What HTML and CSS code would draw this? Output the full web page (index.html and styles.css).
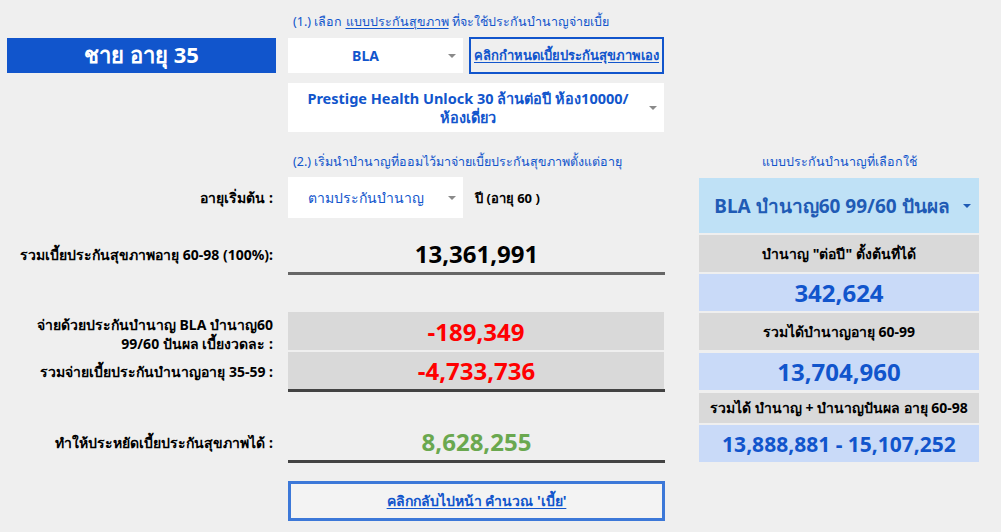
FILE: index.html
```html
<!DOCTYPE html>
<html lang="th">
<head>
<meta charset="utf-8">
<title>ชาย อายุ 35</title>
<link rel="stylesheet" href="styles.css">
</head>
<body>
<div class="sheet">
  <!-- step 1 caption -->
  <div class="caption cap-top c-mid r1">(1.) เลือก <u>แบบประกันสุขภาพ</u> ที่จะใช้ประกันบำนาญจ่ายเบี้ย</div>

  <div class="title c-left r2">ชาย อายุ 35</div>
  <div class="pair c-mid r2">
    <div class="select select-short"><span class="select-text bold">BLA</span><span class="caret"></span></div>
    <a class="link-box" href="#">คลิกกำหนดเบี้ยประกันสุขภาพเอง</a>
  </div>

  <div class="select select-tall c-mid r4">
    <span class="select-text bold">Prestige Health Unlock 30 ล้านต่อปี ห้อง10000/<br>ห้องเดี่ยว</span><span class="caret"></span>
  </div>

  <!-- step 2 caption -->
  <div class="caption cap-step c-mid r5">(2.) เริ่มนำบำนาญที่ออมไว้มาจ่ายเบี้ยประกันสุขภาพตั้งแต่อายุ</div>

  <div class="label c-left r6">อายุเริ่มต้น :</div>
  <div class="pair c-mid r6">
    <div class="select select-age"><span class="select-text">ตามประกันบำนาญ</span><span class="caret"></span></div>
    <span class="unit">ปี (อายุ 60 )</span>
  </div>

  <div class="label c-left r8">รวมเบี้ยประกันสุขภาพอายุ 60-98 (100%):</div>
  <div class="value c-mid r8 rule-mid">13,361,991</div>

  <div class="label c-left r10 label-two">จ่ายด้วยประกันบำนาญ BLA บำนาญ60<br>99/60 ปันผล เบี้ยงวดละ :</div>
  <div class="value c-mid r10 shade neg gap-below">-189,349</div>

  <div class="label c-left r11">รวมจ่ายเบี้ยประกันบำนาญอายุ 35-59 :</div>
  <div class="value c-mid r11 shade-ruled neg">-4,733,736</div>

  <div class="label c-left r13">ทำให้ประหยัดเบี้ยประกันสุขภาพได้ :</div>
  <div class="value c-mid r13 pos rule-dark">8,628,255</div>

  <a class="back c-mid r15" href="#">คลิกกลับไปหน้า คำนวณ 'เบี้ย'</a>

  <!-- chosen pension plan summary -->
  <div class="panel c-right">
    <div class="caption cap-step panel-caption">แบบประกันบำนาญที่เลือกใช้</div>
    <div class="plan"><span class="plan-text">BLA บำนาญ60 99/60 ปันผล</span><span class="caret caret-blue"></span></div>
    <div class="cell head">บำนาญ "ต่อปี" ตั้งต้นที่ได้</div>
    <div class="cell num">342,624</div>
    <div class="cell head">รวมได้บำนาญอายุ 60-99</div>
    <div class="cell num">13,704,960</div>
    <div class="cell head head-short">รวมได้ บำนาญ + บำนาญปันผล อายุ 60-98</div>
    <div class="cell num num-range">13,888,881 - 15,107,252</div>
  </div>
</div>
</body>
</html>
```

FILE: styles.css
```css
* { box-sizing: border-box; }

html, body {
  margin: 0;
  background: #efefef;
}

body {
  font-family: "Noto Sans", "Open Sans", sans-serif;
  color: #000;
  width: 1001px;
  height: 532px;
  overflow: hidden;
}

.sheet {
  display: grid;
  grid-template-columns: 269px 377px 302px;
  grid-template-rows: 37px 37px 9px 49px 45px 42px 16px 40px 37px 40px 40px 31px 40px 17px 42px;
  column-gap: 12px;
  padding-left: 7px;
}

.c-left { grid-column: 1; }
.c-mid { grid-column: 2; }
.c-right { grid-column: 3; grid-row: 5 / 14; }

.r1 { grid-row: 1; }
.r2 { grid-row: 2; }
.r4 { grid-row: 4; }
.r5 { grid-row: 5; }
.r6 { grid-row: 6; }
.r8 { grid-row: 8; }
.r10 { grid-row: 10; }
.r11 { grid-row: 11; }
.r13 { grid-row: 13; }
.r15 { grid-row: 15; }

.bold { font-weight: 700; }

/* small blue captions above each step */
.caption {
  padding-left: 5px;
  font-size: 12.5px;
  line-height: 16px;
  color: #1155cc;
  white-space: nowrap;
}
.cap-top { padding-top: 14px; }
.cap-step { padding-top: 22px; }
.caption u { text-underline-offset: 2px; }

.title {
  margin-top: 1px;
  height: 35px;
  background: #1155cc;
  color: #fff;
  font-size: 22px;
  font-weight: 700;
  display: flex;
  align-items: center;
  justify-content: center;
}

.pair {
  display: flex;
  align-items: stretch;
  gap: 6px;
}

/* dropdown cells */
.select {
  position: relative;
  background: #fff;
  display: flex;
  align-items: center;
  justify-content: center;
  color: #1155cc;
  font-size: 14px;
  padding-right: 22px;
}
.select-short {
  width: 175px;
  margin: 1px 0;
  padding-left: 2px;
}
.select-tall {
  width: 376px;
  text-align: center;
  font-size: 14.5px;
  line-height: 19px;
  padding-left: 8px;
  padding-right: 24px;
}
.select-age {
  width: 175px;
  margin-bottom: 1px;
  padding-left: 2px;
  font-weight: 500;
}

.caret {
  position: absolute;
  right: 7px;
  top: 50%;
  margin-top: -2px;
  width: 0;
  height: 0;
  border-left: 4px solid transparent;
  border-right: 4px solid transparent;
  border-top: 4px solid #8a8a8a;
}
.caret-blue {
  right: 8px;
  border-top-color: #1f5bb5;
}

.link-box {
  width: 195px;
  border: 2px solid #1155cc;
  display: flex;
  align-items: center;
  justify-content: center;
  color: #1155cc;
  font-size: 13px;
  font-weight: 700;
  white-space: nowrap;
  text-underline-offset: 2px;
}

.unit {
  align-self: center;
  margin-left: 6px;
  font-size: 13px;
  font-weight: 700;
}

/* right-aligned row labels */
.label {
  display: flex;
  align-items: center;
  justify-content: flex-end;
  text-align: right;
  padding-right: 3px;
  font-size: 14px;
  font-weight: 700;
  line-height: 16px;
  white-space: nowrap;
}
.label-two {
  padding-top: 4px;
  line-height: 19px;
}

/* figures in the middle column */
.value {
  display: flex;
  align-items: center;
  justify-content: center;
  font-size: 24px;
  font-weight: 700;
}
.shade { background: #d9d9d9; width: 376px; }
.gap-below { margin-bottom: 2px; }
.shade-ruled {
  width: 377px;
  border-bottom: 3px solid #434343;
  background: linear-gradient(#d9d9d9, #d9d9d9) 0 0 / 376px 100% no-repeat;
}
.neg { color: #ff0000; }
.pos { color: #6aa84f; }
.rule-mid { border-bottom: 3px solid #666; }
.rule-dark { border-bottom: 3px solid #434343; }

.back {
  margin-top: 1px;
  height: 40px;
  border: 3px solid #3c78d8;
  background: #f3f3f3;
  display: flex;
  align-items: center;
  justify-content: center;
  color: #1155cc;
  font-size: 14px;
  font-weight: 700;
  text-underline-offset: 2px;
}

/* pension plan panel */
.panel {
  margin-left: 22px;
  width: 280px;
  display: flex;
  flex-direction: column;
  gap: 2px;
}
.panel-caption {
  height: 45px;
  padding-left: 0;
  text-align: center;
  margin-bottom: -1px;
}
.plan {
  position: relative;
  height: 55px;
  background: #bfe1f6;
  display: flex;
  align-items: center;
  justify-content: center;
  padding-right: 14px;
  color: #1f5bb5;
  font-size: 19px;
  font-weight: 700;
  white-space: nowrap;
}
.cell {
  height: 37px;
  display: flex;
  align-items: center;
  justify-content: center;
  font-weight: 700;
  white-space: nowrap;
}
.head {
  background: #d9d9d9;
  font-size: 14px;
}
.head-short { height: 30px; }
.num {
  background: #c9daf8;
  color: #1155cc;
  font-size: 24px;
}
.num-range { font-size: 21px; }
.panel .cell:nth-child(6),
.panel .cell:nth-child(7) { margin-top: 1px; }
```
